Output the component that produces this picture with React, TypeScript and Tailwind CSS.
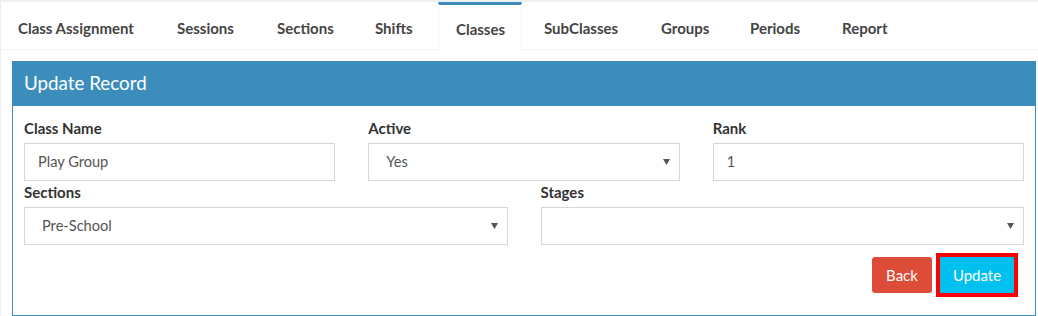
import React from "react";

const tabs: { label: string; w: string; active?: boolean }[] = [
  { label: "Class Assignment", w: "w-[154px]" },
  { label: "Sessions", w: "w-[95px]" },
  { label: "Sections", w: "w-[93px]" },
  { label: "Shifts", w: "w-[75px]" },
  { label: "Classes", w: "w-[84px]", active: true },
  { label: "SubClasses", w: "w-[112px]" },
  { label: "Groups", w: "w-[84px]" },
  { label: "Periods", w: "w-[87px]" },
  { label: "Report", w: "w-[87px]" },
];

function Arrow() {
  return (
    <svg width="7" height="6" viewBox="0 0 7 6" className="absolute right-[9px] top-1/2 -translate-y-1/2">
      <path d="M0 0 H7 L3.5 6 Z" fill="#555" />
    </svg>
  );
}

function Field({ label, value, select }: { label: string; value: string; select?: boolean }) {
  return (
    <div className="flex flex-col">
      <label className="text-[15px] font-bold text-[#333] leading-[20px] h-[20px]">{label}</label>
      <div className="relative mt-[5px] h-[38px] border border-[#d2d6de] bg-white flex items-center">
        <span className={`text-[14.6px] text-[#555] ${select ? "pl-[17px]" : "pl-[13px]"}`}>{value}</span>
        {select && <Arrow />}
      </div>
    </div>
  );
}

export default function App() {
  return (
    <div className="w-[1038px] h-[316px] bg-[#ecf0f5] pt-[2px] pl-[1px] overflow-hidden" style={{ fontFamily: "Lato, 'Noto Sans', sans-serif" }}>
      <div className="bg-white h-[314px] flex flex-col">
        <div className="flex h-[48px] border-b border-[#f4f4f4]">
          {tabs.map((t) => (
            <div
              key={t.label}
              className={`${t.w} shrink-0 mr-[5px] pl-[17px] flex items-center text-[15px] font-bold text-[#444] ${
                t.active ? "border-t-[3px] border-t-[#3c8dbc] border-x border-x-[#f4f4f4] h-[49px] bg-white pl-[17px] pt-[2px]" : "pt-[5px]"
              }`}
            >
              {t.label}
            </div>
          ))}
        </div>
        <div className="pl-[11px] pr-[2px] pt-[11px]">
          <div className="border border-[#3c8dbc] h-[255px] flex flex-col">
            <div className="bg-[#3c8dbc] h-[44px] flex items-center pl-[11px] pb-[1px] text-[18.8px] text-white">Update Record</div>
            <div className="px-[11px] pt-[12px] flex flex-col">
              <div className="grid grid-cols-3 gap-x-[33px]">
                <Field label="Class Name" value="Play Group" />
                <Field label="Active" value="Yes" select />
                <Field label="Rank" value="1" />
              </div>
              <div className="grid grid-cols-2 gap-x-[33px] mt-[1px]">
                <Field label="Sections" value="Pre-School" select />
                <Field label="Stages" value="" select />
              </div>
              <div className="flex justify-end mt-[12px] pr-[10px] gap-[8px]">
                <button className="h-[36px] w-[60px] bg-[#dd4b39] rounded-[3px] text-white text-[15px]">Back</button>
                <button className="h-[36px] w-[74px] bg-[#00c0ef] text-white text-[15px] ring-4 ring-[#ff0000] border border-white/0">Update</button>
              </div>
            </div>
          </div>
        </div>
      </div>
    </div>
  );
}
